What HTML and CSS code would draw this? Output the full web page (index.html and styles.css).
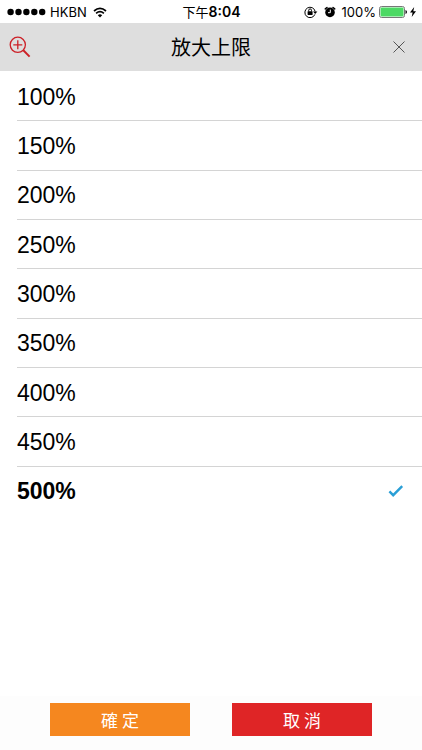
FILE: index.html
```html
<!DOCTYPE html>
<html lang="zh-Hant">
<head>
    <meta charset="UTF-8">
    <meta name="viewport" content="width=device-width, initial-scale=1.0">
    <title>放大上限</title>
    <link rel="stylesheet" href="styles.css">
</head>
<body>
    <div class="status-bar">
        <div class="status-left">
            <svg class="signal" width="39" height="8" viewBox="0 0 39 8">
                <circle cx="3.6" cy="4" r="3.2"/>
                <circle cx="11.5" cy="4" r="3.2"/>
                <circle cx="19.4" cy="4" r="3.2"/>
                <circle cx="27.3" cy="4" r="3.2"/>
                <circle cx="35.2" cy="4" r="3.2"/>
            </svg>
            <span>HKBN</span>
            <svg class="wifi" width="14" height="11" viewBox="0 0 14 11">
                <path d="M1 4Q7 -1.2 13 4M3.1 6.4Q7 3 10.9 6.4" fill="none" stroke="#000" stroke-width="1.7"/>
                <path d="M4.8 8.2Q7 6.4 9.2 8.2L7 10.5Z"/>
            </svg>
        </div>
        <div class="status-time"><span>下午</span>8:04</div>
        <div class="status-right">
            <svg width="14" height="12" viewBox="0 0 14 12">
                <path d="M10.9 8.4A5.2 5.2 0 1 1 11.2 5.6" fill="none" stroke="#000" stroke-width="1"/>
                <path d="M9 5.4H13.4L11.2 8Z"/>
                <rect x="3.6" y="5.2" width="5" height="3.8" rx=".4"/>
                <path d="M4.7 5.4V4.3A1.4 1.4 0 0 1 7.5 4.3V5.4" fill="none" stroke="#000" stroke-width="1"/>
            </svg>
            <svg class="alarm" width="12" height="12" viewBox="0 0 12 12">
                <circle cx="6" cy="6.4" r="4.8"/>
                <path d="M1.3 2.9L3 1.5M10.7 2.9L9 1.5" stroke="#000" stroke-width="1.5" stroke-linecap="round"/>
                <path d="M6.3 3.6V6.7H4" fill="none" stroke="#fff" stroke-width="1"/>
            </svg>
            <span>100%</span>
            <svg class="battery" width="28" height="12" viewBox="0 0 28 12">
                <rect x=".5" y=".5" width="25" height="11" rx="2" fill="#fff" stroke="#777"/>
                <rect x="1.5" y="1.5" width="23" height="9" rx="1" fill="#4cd964"/>
                <path d="M26.5 4Q28 4.4 28 6T26.5 8Z"/>
            </svg>
            <svg class="bolt" width="6" height="10" viewBox="0 0 6 10">
                <path d="M4.2 0L0 5.6H2.6L1.7 10L6 4.2H3.3Z"/>
            </svg>
        </div>
    </div>

    <header class="header">
        <svg class="zoom-icon" width="22" height="22" viewBox="0 0 22 22">
            <circle cx="8.8" cy="8.8" r="7.6"/>
            <path d="M8.8 4.3V13.3M4.3 8.8H13.3"/>
            <path class="handle" d="M14.3 14.3L20.6 20.6"/>
        </svg>
        <h1>放大上限</h1>
        <button class="close" type="button" aria-label="關閉">
            <svg width="12" height="12" viewBox="0 0 12 12">
                <path d="M.5 .5L11.5 11.5M11.5 .5L.5 11.5"/>
            </svg>
        </button>
    </header>

    <form class="panel">
        <div class="options">
            <label class="option"><input type="radio" name="limit" value="100"><span>100%</span></label>
            <label class="option"><input type="radio" name="limit" value="150"><span>150%</span></label>
            <label class="option"><input type="radio" name="limit" value="200"><span>200%</span></label>
            <label class="option"><input type="radio" name="limit" value="250"><span>250%</span></label>
            <label class="option"><input type="radio" name="limit" value="300"><span>300%</span></label>
            <label class="option"><input type="radio" name="limit" value="350"><span>350%</span></label>
            <label class="option"><input type="radio" name="limit" value="400"><span>400%</span></label>
            <label class="option"><input type="radio" name="limit" value="450"><span>450%</span></label>
            <label class="option">
                <input type="radio" name="limit" value="500" checked><span>500%</span>
                <svg class="check" width="16" height="12" viewBox="0 0 16 12">
                    <path d="M1.4 6.4L5.2 10.2L14.2 1.2"/>
                </svg>
            </label>
        </div>
        <div class="actions">
            <button class="btn confirm" type="button">確 定</button>
            <button class="btn cancel" type="button">取 消</button>
        </div>
    </form>
</body>
</html>
```
FILE: styles.css
```css
* {
    margin: 0;
    padding: 0;
    box-sizing: border-box;
}
body {
    display: flex;
    flex-direction: column;
    min-height: 100vh;
    background-color: #fff;
    color: #000;
    font-family: "Liberation Sans", "Noto Sans CJK TC", sans-serif;
}
svg {
    display: block;
    flex: none;
}

/* status bar */
.status-bar {
    display: grid;
    grid-template-columns: 1fr auto 1fr;
    align-items: center;
    height: 23px;
    padding: 1px 6px 0 7px;
    font-family: Inter, "Noto Sans CJK TC", sans-serif;
    font-size: 13px;
    line-height: 22px;
}
.status-left,
.status-right {
    display: flex;
    align-items: center;
}
.status-left {
    gap: 4px;
}
.status-right {
    justify-content: flex-end;
    gap: 6px;
}
.wifi {
    margin-left: 2px;
}
.status-time {
    font-size: 14px;
    font-weight: 600;
}
.status-time span {
    font-size: 13px;
    font-weight: 400;
}
.battery {
    margin-left: -3px;
}
.bolt {
    margin-left: -3px;
}

/* title */
.header {
    display: grid;
    grid-template-columns: 1fr auto 1fr;
    align-items: center;
    height: 48px;
    padding: 0 9px;
    background-color: #dedede;
}
.header h1 {
    font-family: "Noto Sans CJK TC", sans-serif;
    font-size: 20px;
    font-weight: 400;
    line-height: 28px;
}
.zoom-icon {
    fill: none;
    stroke: #cc2027;
    stroke-width: 1.3;
}
.zoom-icon .handle {
    stroke-width: 2;
}
.close {
    justify-self: end;
    padding: 8px;
    border: none;
    background: none;
    cursor: pointer;
}
.close svg {
    stroke: #555;
    stroke-width: 1;
}

/* options */
.panel {
    display: flex;
    flex: 1;
    flex-direction: column;
}
.options {
    display: grid;
    grid-auto-rows: 1fr;
    min-height: 445px;
    padding: 1px 0 0 17px;
}
.option {
    display: flex;
    align-items: center;
    justify-content: space-between;
    padding: 1px 18px 0 0;
    border-bottom: 1px solid #d4d4d4;
    font-size: 23px;
    line-height: 28px;
    cursor: pointer;
}
.option:last-child {
    border-bottom-color: transparent;
}
.option input {
    position: absolute;
    appearance: none;
}
.option input:checked + span {
    font-weight: bold;
}
.check {
    fill: none;
    stroke: #2a9fd6;
    stroke-width: 2.4;
}

/* buttons */
.actions {
    display: flex;
    gap: 42px;
    margin-top: auto;
    padding: 7px 50px 14px;
    background-color: #fdfdfd;
}
.btn {
    flex: 1;
    height: 33px;
    border: none;
    color: #fff;
    font-family: "Noto Sans CJK TC", sans-serif;
    font-size: 17px;
    line-height: 33px;
    cursor: pointer;
}
.confirm {
    background-color: #f5871f;
}
.cancel {
    background-color: #df2526;
}
```
